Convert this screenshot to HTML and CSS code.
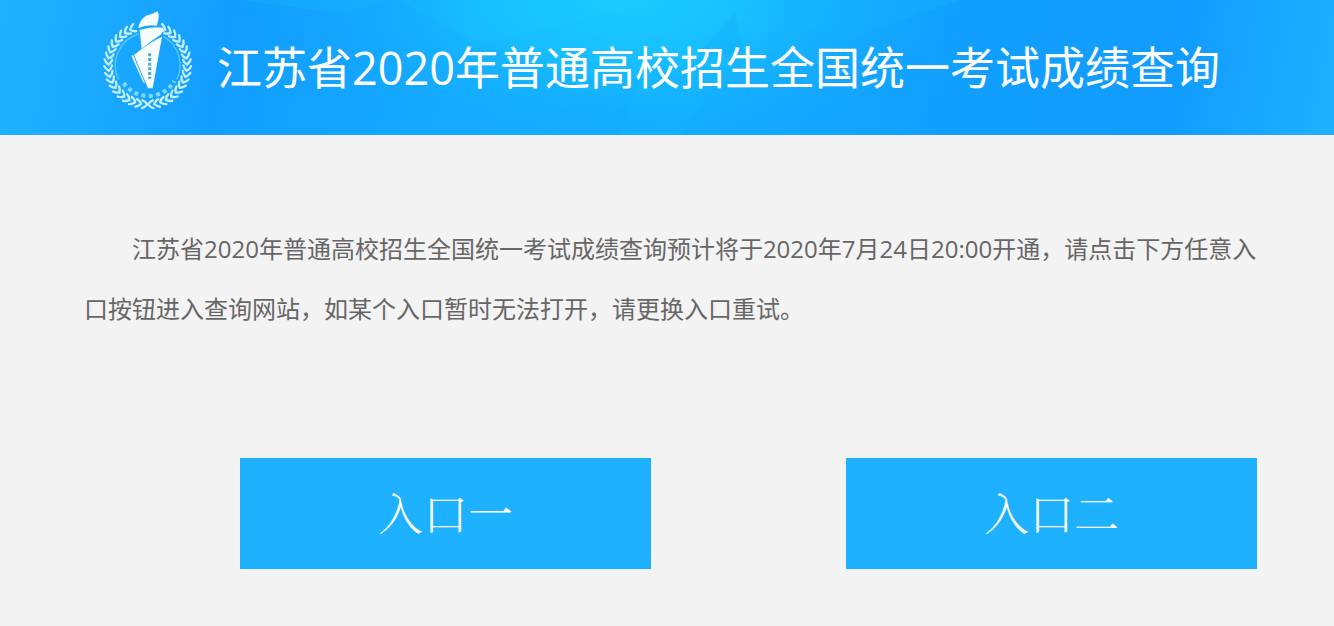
FILE: index.html
```html
<!DOCTYPE html>
<html lang="zh-CN">
<head>
<meta charset="UTF-8" />
<meta name="viewport" content="width=device-width, initial-scale=1" />
<title>江苏省2020年普通高校招生全国统一考试成绩查询</title>
<link rel="stylesheet" href="styles.css">
</head>
<body>

<header class="banner">
  <svg class="banner-bg" viewBox="0 0 1334 135" preserveAspectRatio="none" aria-hidden="true">
    <defs>
      <radialGradient id="glow" gradientUnits="userSpaceOnUse" cx="0" cy="0" r="1" gradientTransform="translate(625 0) scale(330 150)">
        <stop offset="0" stop-color="#1accff" />
        <stop offset="0.4" stop-color="#19c5ff" stop-opacity="0.75" />
        <stop offset="1" stop-color="#14aaff" stop-opacity="0" />
      </radialGradient>
    </defs>
    <rect width="1334" height="135" fill="url(#glow)" />
    <polygon points="240,0 345,14 385,0" fill="#1cc4ff" opacity="0.2" />
    <polygon points="400,0 480,45 665,0" fill="#1cd2ff" opacity="0.15" />
    <polygon points="700,52 735,13 745,60" fill="#0a9ff0" opacity="0.2" />
    <polygon points="735,13 850,38 960,0 760,0" fill="#18b8ff" opacity="0.25" />
    <polygon points="480,45 640,100 560,135 420,135" fill="#18b4ff" opacity="0.15" />
    <polygon points="640,80 735,50 680,135 620,135" fill="#1abeff" opacity="0.2" />
  </svg>

  <svg class="emblem" viewBox="39 30 267 300" role="img" aria-label="徽标">
    <defs>
      <path id="leaf" d="M165 302 Q174 304 180 313 Q174 322 165 325" />
      <g id="branch">
        <use href="#leaf" transform="rotate(4 173 195)" />
        <use href="#leaf" transform="rotate(13 173 195)" />
        <use href="#leaf" transform="rotate(22 173 195)" />
        <use href="#leaf" transform="rotate(31 173 195)" />
        <use href="#leaf" transform="rotate(40 173 195)" />
        <use href="#leaf" transform="rotate(49 173 195)" />
        <use href="#leaf" transform="rotate(58 173 195)" />
        <use href="#leaf" transform="rotate(67 173 195)" />
        <use href="#leaf" transform="rotate(76 173 195)" />
        <use href="#leaf" transform="rotate(85 173 195)" />
        <use href="#leaf" transform="rotate(94 173 195)" />
        <use href="#leaf" transform="rotate(103 173 195)" />
        <use href="#leaf" transform="rotate(112 173 195)" />
        <use href="#leaf" transform="rotate(121 173 195)" />
        <use href="#leaf" transform="rotate(130 173 195)" />
        <use href="#leaf" transform="rotate(139 173 195)" />
        <use href="#leaf" transform="rotate(148 173 195)" />
        <use href="#leaf" transform="rotate(157 173 195)" />
      </g>
    </defs>

    <!-- wreath -->
    <g fill="none" stroke="#c4efff" stroke-width="7" stroke-linecap="round">
      <use href="#branch" />
      <use href="#branch" transform="matrix(-1 0 0 1 346 0)" />
    </g>

    <!-- inner ring -->
    <g fill="none" stroke="#5cc6ff" stroke-width="4">
      <path d="M146 102 A97 97 0 0 0 86 238" />
      <path d="M220 110 A97 97 0 0 1 260 238" />
    </g>
    <path d="M101 249 A90 90 0 0 0 253 243" fill="none" stroke="#84d6ff" stroke-width="12" stroke-dasharray="12 10" />

    <!-- torch -->
    <g fill="#f6fdff">
      <path d="M145 84 Q148 60 168 47 Q190 42 203 34 Q211 50 200 77 Q172 72 145 84 Z" />
      <path d="M149 90 Q182 79 219 83 Q222 96 208 107 Q184 122 155 146 Z" />
      <path d="M132 165 Q176 128 216 110 L188 265 L174 265 Z" />
      <path d="M124 167 L129 165 L165 250 L159 245 Z" />
    </g>
    <path d="M179 160 L179 236" fill="none" stroke="#4fa9cc" stroke-width="9" stroke-dasharray="9 5" />
  </svg>

  <h1 class="banner-title">江苏省2020年普通高校招生全国统一考试成绩查询</h1>
</header>

<main>
  <p class="notice">江苏省2020年普通高校招生全国统一考试成绩查询预计将于2020年7月24日20:00开通，请点击下方任意入口按钮进入查询网站，如某个入口暂时无法打开，请更换入口重试。</p>

  <nav class="entries">
    <a class="entry" href="#entry1">入口一</a>
    <a class="entry" href="#entry2">入口二</a>
  </nav>
</main>

</body>
</html>
```
FILE: styles.css
```css
body {
  margin: 0;
  background: #f3f3f3;
  color: #666;
  font-family: "Open Sans", "Noto Sans CJK SC", sans-serif;
}
.banner {
  position: relative;
  display: flex;
  align-items: center;
  gap: 25px;
  height: 135px;
  padding-left: 103px;
  background: linear-gradient(100deg, #1eb2ff 0%, #1cacff 6%, #129eff 17%, #14a8ff 32%, #14acff 52%, #119fff 72%, #119dff 88%, #1eafff 99%);
}
.banner-bg {
  position: absolute;
  top: 0;
  left: 0;
  width: 100%;
  height: 100%;
}
.emblem {
  position: relative;
  flex: none;
  width: 89px;
  height: 100px;
  margin-bottom: 15px;
}
.banner-title {
  position: relative;
  margin: 0;
  color: #fff;
  font-size: 45px;
  font-weight: 400;
  line-height: 60px;
  white-space: nowrap;
}
.notice {
  margin: 84px 72px 0 84px;
  font-size: 24px;
  line-height: 60px;
  text-indent: 2em;
}
.entries {
  display: flex;
  gap: 195px;
  margin-top: 119px;
  padding: 0 77px 0 240px;
}
.entry {
  flex: 1;
  padding-bottom: 3px;
  background: #1eb1ff;
  color: #fff;
  font-family: "Noto Serif CJK SC", "Noto Sans CJK SC", serif;
  font-size: 45px;
  font-weight: 300;
  line-height: 108px;
  text-align: center;
  text-decoration: none;
}
```
